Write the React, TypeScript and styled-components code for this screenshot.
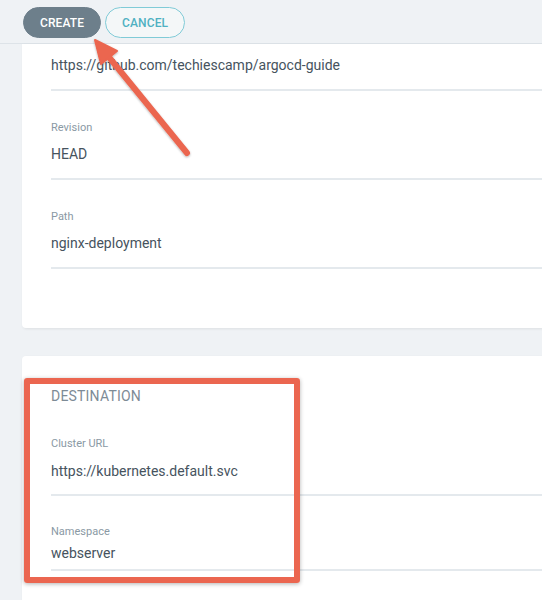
import React from "react";
import styled, { createGlobalStyle } from "styled-components";

const Global = createGlobalStyle`
  html, body { margin: 0; padding: 0; }
  body {
    background: #eff2f5;
    font-family: Roboto, "Liberation Sans", Arial, sans-serif;
    overflow: hidden;
  }
`;

const Page = styled.div`
  position: relative;
  width: 542px;
  height: 600px;
  overflow: hidden;
  background: #eff2f5;
`;

const TopBar = styled.div`
  height: 44px;
  box-sizing: border-box;
  display: flex;
  align-items: flex-start;
  gap: 4px;
  padding: 7px 0 0 23px;
  background: #eff2f5;
  border-bottom: 1px solid #dde3e8;
`;

const Button = styled.button<{ $outline?: boolean }>`
  height: 31px;
  box-sizing: border-box;
  padding: 0 16px;
  border-radius: 16px;
  font-family: Roboto, "Liberation Sans", Arial, sans-serif;
  font-size: 12px;
  font-weight: 500;
  letter-spacing: 0.1px;
  text-transform: uppercase;
  cursor: pointer;
  background: ${(p) => (p.$outline ? "#f4f7f8" : "#6d7f8b")};
  color: ${(p) => (p.$outline ? "#4fb1c2" : "#ffffff")};
  border: 1px solid ${(p) => (p.$outline ? "#80cbd7" : "#6d7f8b")};
  min-width: ${(p) => (p.$outline ? "80px" : "77px")};
`;

const Content = styled.div`
  display: flex;
  flex-direction: column;
  gap: 28px;
`;

const Card = styled.div<{ $pb?: number; $first?: boolean }>`
  margin-left: 22px;
  background: #ffffff;
  box-shadow: 1px 1px 3px rgba(0, 0, 0, 0.08);
  border-radius: ${(p) => (p.$first ? "0 0 0 4px" : "4px 0 0 0")};
  padding: 0 0 ${(p) => p.$pb ?? 0}px 29px;
`;

const SectionTitle = styled.div`
  padding-top: 30px;
  margin-bottom: 1px;
  font-size: 14px;
  line-height: 20px;
  color: #7d8b96;
  letter-spacing: 0.2px;
`;

const FieldBox = styled.div<{ $pt: number; $pb: number }>`
  padding-top: ${(p) => p.$pt}px;
  padding-bottom: ${(p) => p.$pb}px;
  border-bottom: 2px solid #e4e9ed;
`;

const Label = styled.div`
  font-size: 11px;
  line-height: 14px;
  color: #8a99a4;
`;

const Value = styled.div<{ $mt: number }>`
  margin-top: ${(p) => p.$mt}px;
  font-size: 14px;
  line-height: 20px;
  color: #46535e;
  white-space: nowrap;
`;

const RedBox = styled.div`
  position: absolute;
  left: 24px;
  top: 378px;
  width: 276px;
  height: 205px;
  box-sizing: border-box;
  border: 6px solid #eb6650;
  border-radius: 3px;
  box-shadow: 0 1px 4px rgba(0, 0, 0, 0.3);
  pointer-events: none;
`;

const ArrowLayer = styled.svg`
  position: absolute;
  left: 0;
  top: 0;
  pointer-events: none;
`;

type FieldProps = {
  label?: string;
  value: string;
  pt?: number;
  pb?: number;
  gap?: number;
};

const Field = ({ label, value, pt = 30, pb = 14, gap = 9 }: FieldProps) => (
  <FieldBox $pt={pt} $pb={pb}>
    {label && <Label>{label}</Label>}
    <Value $mt={label ? gap : 0}>{value}</Value>
  </FieldBox>
);

export default function App() {
  return (
    <Page>
      <Global />
      <TopBar>
        <Button>Create</Button>
        <Button $outline>Cancel</Button>
      </TopBar>
      <Content>
        <Card $first $pb={59}>
          <Field value="https://github.com/techiescamp/argocd-guide" pt={11} />
          <Field label="Revision" value="HEAD" />
          <Field label="Path" value="nginx-deployment" />
        </Card>
        <Card $pb={40}>
          <SectionTitle>DESTINATION</SectionTitle>
          <Field label="Cluster URL" value="https://kubernetes.default.svc" gap={10} pb={13} />
          <Field label="Namespace" value="webserver" pt={29} gap={4} pb={6} />
        </Card>
      </Content>
      <RedBox />
      <ArrowLayer width="542" height="600" viewBox="0 0 542 600">
        <defs>
          <filter id="sh" x="-20%" y="-20%" width="140%" height="140%">
            <feDropShadow dx="0" dy="1" stdDeviation="1.2" floodColor="#000" floodOpacity="0.3" />
          </filter>
        </defs>
        <g filter="url(#sh)" fill="#eb6650" stroke="#eb6650">
          <line x1="187" y1="153" x2="108" y2="56" strokeWidth="6" strokeLinecap="round" />
          <polygon points="95,40 117,51 101,64" strokeWidth="2" strokeLinejoin="round" />
        </g>
      </ArrowLayer>
    </Page>
  );
}
